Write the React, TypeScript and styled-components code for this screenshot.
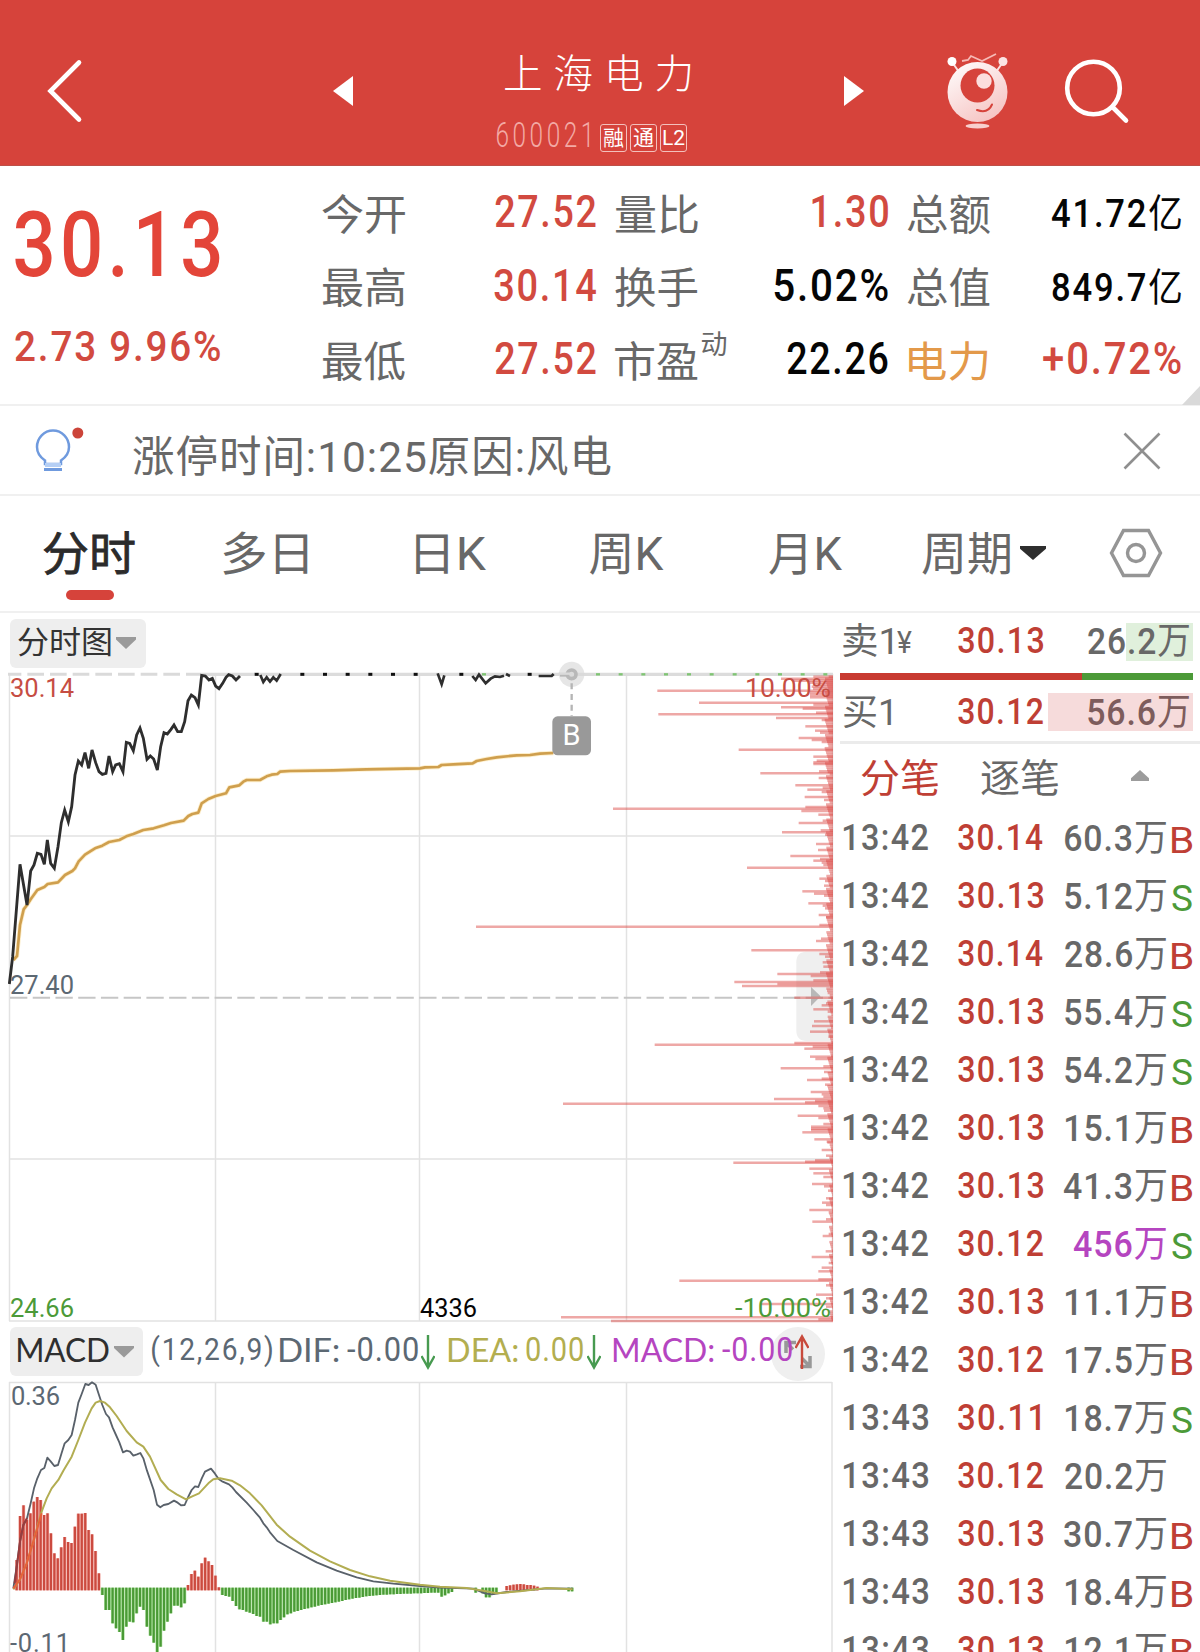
import React, { useLayoutEffect, useState } from 'react';
import styled, { createGlobalStyle } from 'styled-components';

const FONT = 'Roboto, "Noto Sans CJK SC", sans-serif';
const LATIN = 'Lato, "Noto Sans CJK SC", sans-serif';

const C = {
  brand: '#d6433b',
  rise: '#d24a40',
  riseDeep: '#bf3f35',
  fall: '#4c9a38',
  label: '#686868',
  ink: '#050505',
  slate: '#5c6873',
  olive: '#b3ae4f',
  violet: '#b545c0',
  line: '#f0f0f0',
};

const GlobalStyle = createGlobalStyle`
  *, *::before, *::after { box-sizing: border-box; }
  body { margin: 0; background: #fff; font-family: ${FONT}; }
`;

/* ---------- fitted text ---------- */

interface FitProps {
  w: number;
  size: number;
  color?: string;
  weight?: number;
  font?: string;
  spacing?: number;
  dy?: number;
  children: string;
}

const FitBox = styled.span<{ $w: number; $dy: number }>`
  display: block;
  flex: none;
  width: ${(p) => p.$w}px;
  position: relative;
  top: ${(p) => p.$dy}px;
`;

const FitInner = styled.span<{ $size: number; $color: string; $weight: number; $font: string; $spacing: number }>`
  display: inline-block;
  white-space: pre;
  transform-origin: 0 50%;
  font: ${(p) => p.$weight} ${(p) => p.$size}px/1.2 ${(p) => p.$font};
  letter-spacing: ${(p) => p.$spacing}px;
  color: ${(p) => p.$color};
`;

const Han = styled.span`
  font-weight: 400;
`;

/* Condenses a run of text so that its ink is exactly w pixels wide. */
function Fit({ w, size, color = C.label, weight = 400, font = FONT, spacing = 0, dy = 0, children }: FitProps) {
  const [fit, setFit] = useState({ scale: 1, shift: 0 });
  useLayoutEffect(() => {
    const ctx = document.createElement('canvas').getContext('2d') as any;
    ctx.font = `${weight} ${size}px ${font}`;
    ctx.letterSpacing = `${spacing}px`;
    const m = ctx.measureText(children);
    const scale = w / (m.actualBoundingBoxLeft + m.actualBoundingBoxRight);
    setFit({ scale, shift: m.actualBoundingBoxLeft * scale });
  }, [w, size, weight, font, spacing, children]);
  const parts = weight === 500 ? children.split(/([\u4e00-\u9fff]+)/).filter(Boolean) : [children];
  return (
    <FitBox $w={w} $dy={dy}>
      <FitInner
        $size={size}
        $color={color}
        $weight={weight}
        $font={font}
        $spacing={spacing}
        style={{ transform: `translateX(${fit.shift}px) scaleX(${fit.scale})` }}
      >
        {parts.map((part, i) => (weight === 500 && /[\u4e00-\u9fff]/.test(part) ? <Han key={i}>{part}</Han> : part))}
      </FitInner>
    </FitBox>
  );
}

/* ---------- header ---------- */

const Page = styled.div`
  width: 1200px;
  height: 1652px;
  overflow: hidden;
  background: #fff;
`;

const Header = styled.header`
  height: 166px;
  background: ${C.brand};
  display: flex;
  align-items: flex-start;
  border-bottom: 1px solid #bd5048;
`;

const HeaderSvg = styled.svg<{ $ml: number; $mt: number }>`
  flex: none;
  margin: ${(p) => p.$mt}px 0 0 ${(p) => p.$ml}px;
  overflow: visible;
`;

const TitleBlock = styled.div`
  width: 196px;
  margin: 48px 0 0 143px;
  display: flex;
  flex-direction: column;
  align-items: flex-start;
`;

const TitleLine = styled.div`
  height: 50px;
  padding-left: 9px;
  display: flex;
  align-items: center;
`;

const CodeLine = styled.div`
  height: 60px;
  padding-left: 1px;
  display: flex;
  align-items: center;
`;

const Badges = styled.div`
  display: flex;
  gap: 3px;
  margin: 26px 0 0 11px;
  height: 28px;
  align-self: flex-start;
`;

const Badge = styled.span`
  width: 27px;
  height: 28px;
  border: 1.5px solid #f3c0bc;
  border-radius: 3px;
  color: #fff;
  font-size: 21px;
  line-height: 26px;
  display: flex;
  justify-content: center;
`;

function Mascot() {
  return (
    <HeaderSvg $ml={83} $mt={50} width="62" height="80" viewBox="0 0 62 80">
      <defs>
        <linearGradient id="body" x1="0" y1="0" x2="0.6" y2="1">
          <stop offset="0" stopColor="#fff" />
          <stop offset="1" stopColor="#f6c6c5" />
        </linearGradient>
      </defs>
      <path d="M5 12 L12 22 M56 12 L49 22" stroke="#fbe0df" strokeWidth="2" />
      <circle cx="5" cy="11.500" r="4.500" fill="#fff" />
      <circle cx="56" cy="11.500" r="4.500" fill="#fbe4e3" />
      <path d="M15 11 L21 10 L24 6 L35 11 L49 4" stroke="#f6b9b5" strokeWidth="1.800" fill="none" />
      <ellipse cx="30.500" cy="42" rx="30" ry="30" fill="url(#body)" />
      <ellipse cx="30.500" cy="35.500" rx="17" ry="17" fill={C.brand} />
      <circle cx="37" cy="31" r="7.700" fill="#fcdedd" />
      <path d="M30 60 Q41 64 45 54.500" stroke={C.brand} strokeWidth="2" fill="none" strokeLinecap="round" />
      <ellipse cx="30.500" cy="76" rx="12" ry="2.600" fill="#f8cfcd" />
    </HeaderSvg>
  );
}

/* ---------- quote summary ---------- */

const Quote = styled.section`
  position: relative;
  height: 240px;
  display: flex;
  border-bottom: 2px solid ${C.line};
`;

const PriceBlock = styled.div`
  width: 322px;
  padding: 1px 0 0 15px;
`;

const PriceLine = styled.div<{ $h: number }>`
  height: ${(p) => p.$h}px;
  display: flex;
  align-items: center;
`;

const Stats = styled.div`
  display: grid;
  grid-template-columns: 273.500px 273px 274px;
  grid-auto-rows: 73.500px;
  column-gap: 19px;
  padding-top: 10px;
`;

const Stat = styled.div`
  display: flex;
  align-items: center;
  justify-content: space-between;
`;

const StatLabel = styled.div<{ $inset: number }>`
  display: flex;
  align-items: center;
  gap: 4px;
  padding-left: ${(p) => p.$inset}px;
`;

const Corner = styled.i`
  position: absolute;
  right: 0;
  bottom: -1px;
  border-style: solid;
  border-width: 0 0 19px 18px;
  border-color: transparent transparent #d9d9d9 transparent;
`;

type StatItem = { label: string; value: string; w: number; color: string; small?: boolean; sup?: string; labelColor?: string };

const STATS: StatItem[] = [
  { label: '今开', value: '27.52', w: 101, color: C.rise },
  { label: '量比', value: '1.30', w: 76, color: C.rise },
  { label: '总额', value: '41.72亿', w: 129, color: C.ink, small: true },
  { label: '最高', value: '30.14', w: 102, color: C.rise },
  { label: '换手', value: '5.02%', w: 114, color: C.ink },
  { label: '总值', value: '849.7亿', w: 129, color: C.ink, small: true },
  { label: '最低', value: '27.52', w: 101, color: C.rise },
  { label: '市盈', value: '22.26', w: 101, color: C.ink, sup: '动' },
  { label: '电力', value: '+0.72%', w: 138, color: C.rise, labelColor: '#e3994a' },
];

/* ---------- notice ---------- */

const Notice = styled.section`
  height: 90px;
  display: flex;
  align-items: center;
  border-bottom: 2px solid ${C.line};
`;

const Bulb = styled.svg`
  margin: 3px 0 0 34px;
  overflow: visible;
`;

const NoticeText = styled.div`
  margin-left: 51px;
  flex: 1;
`;

const Close = styled.svg`
  margin: 1px 39px 0 0;
`;

/* ---------- tabs ---------- */

const Tabs = styled.nav`
  height: 117px;
  display: flex;
  border-bottom: 2px solid ${C.line};
`;

const Tab = styled.div<{ $w: number; $active: boolean }>`
  width: ${(p) => p.$w}px;
  display: flex;
  flex-direction: column;
  align-items: center;
  padding-top: 31px;
  -webkit-text-stroke: ${(p) => (p.$active ? '0.8px' : '0')};
`;

const Underline = styled.i`
  width: 48px;
  height: 10px;
  margin-top: 8px;
  border-radius: 5px;
  background: ${C.brand};
`;

const Period = styled.div`
  display: flex;
  align-items: flex-start;
  gap: 10px;
  padding: 31px 0 0 16px;
  width: 203px;
`;

const Caret = styled.i<{ $w: number; $h: number; $color: string; $up?: boolean }>`
  flex: none;
  width: ${(p) => p.$w}px;
  height: ${(p) => p.$h}px;
  background: ${(p) => p.$color};
  clip-path: ${(p) => (p.$up ? 'polygon(50% 0, 100% 75%, 100% 100%, 0 100%, 0 75%)' : 'polygon(0 0, 100% 0, 100% 20%, 50% 100%, 0 20%)')};
`;

const PeriodCaret = styled(Caret)`
  margin-top: 19px;
`;

const Gear = styled.svg`
  margin-top: 32px;
`;

/* ---------- body ---------- */

const Body = styled.main`
  display: grid;
  grid-template-columns: 840px 360px;
`;

const ChartCol = styled.div`
  display: flex;
  flex-direction: column;
`;

const ToolRow = styled.div<{ $h: number; $pt?: number }>`
  height: ${(p) => p.$h}px;
  display: flex;
  align-items: center;
  padding: ${(p) => p.$pt ?? 0}px 0 0 10px;
  position: relative;
`;

const Select = styled.div<{ $w: number }>`
  width: ${(p) => p.$w}px;
  height: 49px;
  border-radius: 6px;
  background: #eeeeee;
  display: flex;
  align-items: center;
  padding-left: 8px;
  gap: 5px;
`;

const Readout = styled.div<{ $ml: number }>`
  display: flex;
  align-items: center;
  gap: 8px;
  margin-left: ${(p) => p.$ml}px;
`;

const Chart = styled.svg`
  display: block;
  position: relative;
  overflow: visible;
`;

const ExpandButton = styled.div`
  position: absolute;
  left: 771px;
  top: 2px;
  width: 54px;
  height: 54px;
  border-radius: 50%;
  background: #efefef;
`;

/* ---------- order book and ticks ---------- */

const Side = styled.aside`
  display: flex;
  flex-direction: column;
`;

const BookRow = styled.div<{ $mt: number; $fill: string; $from: number }>`
  height: 38px;
  margin: ${(p) => p.$mt}px 7px 0 0;
  padding-left: 3px;
  display: flex;
  align-items: center;
  background: linear-gradient(${(p) => p.$fill}, ${(p) => p.$fill}) ${(p) => p.$from}px 0 / 400px 100% no-repeat;
`;

const Slot = styled.div<{ $w: number; $end?: boolean; $gap?: number }>`
  width: ${(p) => p.$w}px;
  flex: none;
  display: flex;
  gap: ${(p) => p.$gap ?? 0}px;
  justify-content: ${(p) => (p.$end ? 'flex-end' : 'flex-start')};
`;

const Balance = styled.div`
  display: flex;
  height: 7px;
  margin: 12px 7px 0 0;
  background: ${C.fall};
`;

const BalanceBuy = styled.i`
  width: 242px;
  background: #c83a31;
`;

const SideTabs = styled.div`
  margin-top: 10px;
  border-top: 3px solid #ebebeb;
  height: 69px;
  display: flex;
  align-items: center;
  padding: 1px 0 0 21px;
`;

const SideCaret = styled(Caret)`
  margin: 0 0 3px 73px;
`;

const Tick = styled.div`
  height: 58px;
  flex: none;
  display: flex;
  align-items: center;
  padding-left: 4px;
`;

type TickRow = [string, string, string, number, string, boolean?];
const TICKS: TickRow[] = [
  ['13:42', '30.14', '60.3万', 102, 'B'],
  ['13:42', '30.13', '5.12万', 102, 'S'],
  ['13:42', '30.14', '28.6万', 102, 'B'],
  ['13:42', '30.13', '55.4万', 102, 'S'],
  ['13:42', '30.13', '54.2万', 102, 'S'],
  ['13:42', '30.13', '15.1万', 101, 'B'],
  ['13:42', '30.13', '41.3万', 103, 'B'],
  ['13:42', '30.12', '456万', 93, 'S', true],
  ['13:42', '30.13', '11.1万', 101, 'B'],
  ['13:42', '30.12', '17.5万', 101, 'B'],
  ['13:43', '30.11', '18.7万', 101, 'S'],
  ['13:43', '30.12', '20.2万', 102, ''],
  ['13:43', '30.13', '30.7万', 103, 'B'],
  ['13:43', '30.13', '18.4万', 101, 'B'],
  ['13:43', '30.13', '12.1万', 101, 'B'],
];

/* ---------- chart data (three units per pixel) ---------- */

const PRICE =
  '28,972 38,890 60,613 81,735 92,633 102,615 112,580 123,583 133,613 142,540 152,610 163,625 174,560 184,488 194,450 205,485 215,440 225,345 235,303 245,315 255,278 266,325 276,270 287,308 297,335 307,343 318,340 327,288 338,335 347,315 358,311 369,335 379,247 389,250 400,272 410,225 420,204 430,235 441,298 451,288 461,297 472,330 482,260 492,218 502,222 513,208 522,195 533,215 544,215 554,185 564,122 574,105 585,113 595,135 605,46 616,48 627,60 637,55 647,78 657,86 668,70 678,52 686,44 697,48 708,60 720,48';
const PRICE_TAILS = [
  '781,45 790,66 800,52 810,65 820,52 830,62 842,42',
  '1313,40 1325,73 1333,46',
  '1417,48 1427,60 1437,44 1457,70 1472,56 1485,49 1500,51 1512,47',
  '1518,42 1530,48',
  '1616,48 1655,48 1661,42',
];
const PRICE_DOTS = [770, 907, 975, 1043, 1111, 1179, 1247, 1384, 1589];
const GREEN_DOTS = [1452, 1794, 1862, 1930, 1998, 2067, 2135, 2204, 2272, 2340, 2408, 2476];
const AVERAGE =
  '40,900 51,888 60,795 71,748 81,735 92,718 112,690 133,681 143,672 174,667 195,645 217,633 225,625 236,604 255,584 285,565 307,557 327,546 358,540 379,529 400,522 430,510 461,505 492,496 513,489 551,482 565,468 577,462 595,458 605,430 625,417 647,408 678,400 688,382 718,376 730,365 740,360 780,360 800,349 815,344 832,342 840,335 870,333 1000,331 1100,328 1260,325 1275,322 1315,321 1325,315 1360,313 1418,310 1430,303 1460,297 1490,292 1550,286 1590,285 1620,281 1660,279';

/* Volume-at-price bars: [y, length], measured from the right border. */
const PROFILE: [number, number][] = [
  [50, 59], [56, 156], [62, 119], [68, 70], [74, 60], [80, 64], [86, 60], [92, 527], [98, 69], [105, 69], [112, 69], [128, 402], [134, 59], [142, 156],
  [146, 91], [158, 51], [163, 524], [174, 171], [180, 34], [199, 83], [212, 54], [218, 39], [234, 103], [240, 64], [246, 34], [269, 283],
  [290, 59], [302, 49], [307, 59], [312, 59], [334, 42], [340, 218], [354, 43], [376, 113], [383, 31], [389, 77], [396, 34], [411, 85],
  [420, 27], [441, 83], [446, 660], [453, 95], [464, 44], [482, 31], [489, 103], [511, 37], [517, 153], [524, 24], [552, 51], [570, 45],
  [588, 128], [597, 39], [602, 59], [608, 34], [615, 29], [623, 258], [656, 41], [663, 24], [677, 27], [694, 92], [701, 57], [707, 27],
  [730, 74], [737, 31], [745, 24], [765, 43], [772, 21], [795, 41], [800, 1071], [836, 36], [843, 51], [871, 245], [882, 41], [890, 24],
  [907, 31], [920, 29], [937, 39], [942, 167], [948, 67], [961, 59], [966, 296], [972, 167], [978, 273], [1013, 116], [1030, 21],
  [1036, 34], [1048, 59], [1055, 16], [1084, 57], [1098, 63], [1115, 69], [1130, 14], [1149, 116], [1154, 535], [1160, 61], [1166, 86],
  [1190, 69], [1197, 53], [1219, 29], [1225, 157], [1236, 27], [1256, 34], [1260, 78], [1274, 24], [1296, 67], [1303, 34], [1310, 29],
  [1317, 177], [1323, 54], [1327, 84], [1331, 810], [1338, 44], [1345, 29], [1352, 27], [1367, 106], [1374, 44], [1392, 29], [1400, 66],
  [1406, 66], [1410, 66], [1417, 92], [1438, 56], [1445, 19], [1470, 34], [1487, 21], [1501, 54], [1505, 84], [1508, 299], [1526, 71],
  [1540, 59], [1551, 29], [1572, 63], [1579, 27], [1592, 15], [1615, 21], [1628, 33], [1635, 21], [1650, 71], [1657, 13], [1678, 21],
  [1685, 62], [1722, 13], [1728, 31], [1774, 22], [1791, 64], [1809, 13], [1823, 34], [1834, 44], [1858, 44], [1862, 461], [1876, 21],
  [1904, 51], [1915, 21], [1932, 219], [1940, 21], [1972, 816], [1978, 44], [1983, 666],
];

/* Short bars that fill the foot of the profile. */
const FOOT: [number, number][] = Array.from({ length: 298 }, (_, i) => {
  const y = 50 + i * 6.5;
  const base = y < 340 ? 20 : y < 1000 ? 16 : y < 1450 ? 12 : 7;
  return [y, Math.max(2, base + ((i * 37) % 13) - 7)];
});

const DIF =
  '40,865 50,800 60,725 70,675 81,655 92,610 102,565 112,535 123,510 133,504 142,473 152,484 163,498 174,495 184,462 194,430 205,420 215,405 225,360 235,308 245,282 256,252 266,255 276,247 287,254 297,285 307,315 318,342 327,352 338,383 348,405 358,427 369,457 380,452 390,455 400,467 411,463 421,459 430,475 441,512 461,570 471,614 481,622 491,615 505,612 522,602 533,608 543,616 554,615 565,590 575,570 585,559 595,561 605,536 615,515 633,506 645,521 656,537 668,545 687,553 697,562 708,576 740,608 760,630 780,653 790,670 800,682 810,697 832,723 880,750 950,787 1010,812 1070,832 1120,844 1180,851 1260,858 1320,863 1420,866 1455,880 1475,883 1520,876 1600,869 1640,865 1718,866';
const DEA =
  '40,868 60,838 80,790 100,725 123,640 140,595 155,565 175,540 190,512 215,470 235,420 255,368 275,325 287,308 300,303 315,308 330,322 350,348 380,393 410,427 430,440 450,470 482,540 505,567 530,583 558,598 575,590 597,580 625,550 640,538 660,535 695,542 720,556 750,580 785,616 830,674 870,710 930,752 990,784 1050,810 1110,829 1170,842 1260,854 1320,860 1400,864 1450,872 1490,880 1560,874 1640,864 1718,868';

const STEP = 10.28;
const RUNS: { x: number; up: boolean; v: number[] }[] = [
  { x: 50, up: true, v: [780, 648, 616, 660, 640, 605, 591, 600, 645, 640, 700, 760, 775, 742, 711, 726, 729, 680, 641, 641, 639, 690, 703, 753, 820] },
  { x: 307, up: false, v: [885, 930, 930, 970, 985, 996, 1020, 980, 965, 967, 940, 920, 930, 980, 1007, 1028, 1060, 1040, 992, 965, 940, 917, 917, 922, 910] },
  { x: 564, up: true, v: [855, 822, 812, 830, 790, 773, 784, 795, 827, 862] },
  {
    x: 667,
    up: false,
    v: [885, 888, 890, 903, 918, 928, 930, 935, 938, 942, 948, 950, 965, 965, 973, 970, 970, 960, 952, 943, 940, 935, 933, 930, 927, 925, 922, 920, 917, 915, 913, 911, 909, 907, 905, 903, 900, 898, 896, 894, 893, 891, 889, 888, 887, 886, 885, 884, 884, 883, 883, 882, 882, 881, 881, 881, 880, 880, 880, 879, 879, 878, 878, 878, 890, 886, 880, 876],
  },
  { x: 1427, up: false, v: [878] },
  { x: 1448, up: false, v: [880, 892, 892, 885, 878] },
  { x: 1520, up: true, v: [858, 856, 854, 853, 852, 853, 855, 855, 857, 860] },
  { x: 1706, up: false, v: [874, 874] },
];

const ChartText = styled.text`
  font-family: ${FONT};
  font-weight: 400;
  font-size: 25.500px;
`;

const MarkerText = styled(ChartText)`
  font-size: 29px;
`;

function PriceChart() {
  return (
    <Chart width="840" height="655" viewBox="0 0 840 655">
      <g stroke="#e2e2e2" strokeWidth="1.500" fill="none">
        <path d="M9.500 4V651M215.500 4V651M419.500 4V651M626.500 4V651M832.500 4V651" />
        <path d="M9 166H832M9 489H832M9 651H832" />
      </g>
      <g transform="translate(0 -10) scale(0.33333)" fill="none">
        <path d="M2420 875H2499V1143H2420Q2389 1143 2389 1111V907Q2389 875 2420 875Z" fill="#efefef" />
        <path d="M2433 981V1038L2462 1009Z" fill="#b8b8b8" />
        <path d="M24 43H605" stroke="#dadada" strokeWidth="9" strokeDasharray="50 18" strokeDashoffset="10" />
        <path d="M605 43H2499" stroke="#dcdcdc" strokeWidth="10" />
        <path d="M30 1013H2499" stroke="#c6c6c6" strokeWidth="6" strokeDasharray="52 16.200" />
        {[...PROFILE, ...FOOT].map(([y, len], i) => (
          <path key={i} d={`M${2499 - len} ${y}H2499`} stroke="#dc4a46" strokeOpacity="0.480" strokeWidth="7.500" />
        ))}
        <polyline points={AVERAGE} stroke="#fbe3a6" strokeOpacity="0.600" strokeWidth="13" />
        <polyline points={AVERAGE} stroke="#cf9f4e" strokeWidth="8" strokeLinejoin="round" />
        <polyline points={PRICE} stroke="#2e2e2e" strokeWidth="8.500" />
        {PRICE_TAILS.map((t) => (
          <polyline key={t} points={t} stroke="#2e2e2e" strokeWidth="8" />
        ))}
        {PRICE_DOTS.map((x) => (
          <path key={x} d={`M${x - 6} 43h12`} stroke="#111" strokeWidth="9" />
        ))}
        {GREEN_DOTS.map((x) => (
          <path key={x} d={`M${x - 6} 43h12`} stroke="#7fc573" strokeWidth="7" />
        ))}
        <circle cx="1715" cy="43" r="38" fill="#d9d9d9" fillOpacity="0.650" />
        <path d="M1680 46H1715" stroke="#b8b8b8" strokeWidth="8" />
        <circle cx="1715" cy="43" r="13" fill="#dadada" stroke="#b8b8b8" strokeWidth="11" />
        <path d="M1676 41H1715" stroke="#dadada" strokeWidth="7" />
        <path d="M1715 70V168" stroke="#b5b5b5" strokeWidth="7" strokeDasharray="18 14" />
        <rect x="1657" y="169" width="116" height="117" rx="16" fill="#999" />
      </g>
      <MarkerText x="571.500" y="75" textAnchor="middle" fill="#fff">B</MarkerText>
      <ChartText x="10" y="27" fill="#c64d43" textLength="64">30.14</ChartText>
      <ChartText x="745" y="27" fill="#c64d43" textLength="86" lengthAdjust="spacingAndGlyphs">10.00%</ChartText>
      <ChartText x="10" y="324" fill={C.slate} textLength="64">27.40</ChartText>
      <ChartText x="10" y="647" fill={C.fall} textLength="64">24.66</ChartText>
      <ChartText x="420" y="647" fill={C.ink} textLength="57" lengthAdjust="spacingAndGlyphs">4336</ChartText>
      <ChartText x="735" y="647" fill={C.fall} textLength="96" lengthAdjust="spacingAndGlyphs">-10.00%</ChartText>
    </Chart>
  );
}

function MacdChart() {
  return (
    <Chart width="840" height="274" viewBox="0 0 840 274">
      <path d="M9.500 4V274M215.500 4V274M419.500 4V274M626.500 4V274M832 4V274M9 4.500H832" stroke="#e2e2e2" strokeWidth="1.500" />
      <g transform="translate(0 -78) scale(0.33333)" fill="none">
        {RUNS.map((run) =>
          run.v.map((v, i) => {
            const x = run.x + i * STEP;
            return (
              <g key={`${run.x}-${i}`}>
                <path d={`M${x} ${run.up ? 871 : 863}V${v}`} stroke={run.up ? '#f0a69f' : '#a4dc94'} strokeWidth="10" />
                <path d={`M${x} ${run.up ? 871 : 863}V${v}`} stroke={run.up ? '#cb4a3f' : '#4a9a36'} strokeWidth="6.500" />
              </g>
            );
          }),
        )}
        <polyline points={DIF} stroke="#59616a" strokeWidth="5.500" strokeLinejoin="round" />
        <polyline points={DEA} stroke="#b2ad52" strokeWidth="6" strokeLinejoin="round" />
        <path d="M40 865L60 838L80 790L100 725L125 640" stroke="#e8603a" strokeWidth="6" />
        <path d="M44 850L60 725L70 675L81 655" stroke="#9b3b3c" strokeWidth="6" />
      </g>
      <ChartText x="11" y="27" fill={C.slate} textLength="49">0.36</ChartText>
      <ChartText x="10" y="274" fill={C.slate} textLength="60">-0.11</ChartText>
    </Chart>
  );
}

function Arrow({ color, up }: { color: string; up?: boolean }) {
  return (
    <svg width="14" height="36" viewBox="0 0 14 36" fill="none" stroke={color} strokeWidth="2.400">
      <path d={up ? 'M7 35V2M0.500 14L7 2.500L13.500 14' : 'M7 1V34M0.500 22L7 33.500L13.500 22'} />
    </svg>
  );
}

const ArrowSlot = styled.div<{ $ml: number }>`
  display: flex;
  position: relative;
  margin-left: ${(p) => p.$ml}px;
`;

const ExpandIcon = styled.svg`
  display: block;
`;

const TABS: [string, number, number][] = [
  ['分时', 179, 91],
  ['多日', 173, 85],
  ['日K', 197, 70],
  ['周K', 155, 74],
  ['月K', 202, 73],
];

export default function App() {
  return (
    <Page>
      <GlobalStyle />
      <Header>
        <HeaderSvg $ml={46} $mt={58} width="36" height="66" viewBox="0 0 36 66" fill="none">
          <path d="M33 4.500L4.500 33L33 61.500" stroke="#fff" strokeWidth="4.600" strokeLinecap="round" />
        </HeaderSvg>
        <HeaderSvg $ml={251} $mt={76} width="20" height="30" viewBox="0 0 20 30">
          <path d="M20 0V30L0 15Z" fill="#fff" />
        </HeaderSvg>
        <TitleBlock>
          <TitleLine>
            <Fit w={186} size={40} weight={300} color="#fff" spacing={11} dy={2}>上海电力</Fit>
          </TitleLine>
          <CodeLine>
            <Fit w={92} size={35} weight={300} color="#f3aaa5" spacing={5} dy={8}>600021</Fit>
            <Badges>
              <Badge>融</Badge>
              <Badge>通</Badge>
              <Badge>L2</Badge>
            </Badges>
          </CodeLine>
        </TitleBlock>
        <HeaderSvg $ml={152} $mt={76} width="20" height="30" viewBox="0 0 20 30">
          <path d="M0 0V30L20 15Z" fill="#fff" />
        </HeaderSvg>
        <Mascot />
        <HeaderSvg $ml={55} $mt={57} width="66" height="68" viewBox="0 0 66 68" fill="none">
          <circle cx="29.500" cy="31" r="26.300" stroke="#fff" strokeWidth="4.600" />
          <path d="M48.500 50L62 63.500" stroke="#fff" strokeWidth="4.600" strokeLinecap="round" />
        </HeaderSvg>
      </Header>

      <Quote>
        <PriceBlock>
          <PriceLine $h={157}>
            <Fit w={205} size={90} weight={500} color="#e34539" spacing={5}>30.13</Fit>
          </PriceLine>
          <PriceLine $h={45}>
            <Fit w={205} size={43} weight={500} color={C.rise} spacing={2}>2.73 9.96%</Fit>
          </PriceLine>
        </PriceBlock>
        <Stats>
          {STATS.map((s, i) => (
            <Stat key={i}>
              <StatLabel $inset={s.labelColor ? 2 : 0}>
                <Fit w={s.labelColor ? 79 : 83} size={42} color={s.labelColor} dy={3}>{s.label}</Fit>
                {s.sup && <Fit w={25} size={27} dy={-15}>{s.sup}</Fit>}
              </StatLabel>
              <Fit w={s.w} size={s.small ? 39 : 44} weight={500} color={s.color} spacing={2} dy={s.small ? 2 : 0}>
                {s.value}
              </Fit>
            </Stat>
          ))}
        </Stats>
        <Corner />
      </Quote>

      <Notice>
        <Bulb width="48" height="46" viewBox="0 0 48 46" fill="none">
          <path d="M11 35V31.500Q3 26 3 18A16 16.500 0 0 1 35 18Q35 26 27 31.500V35Z" stroke="#6f9ade" strokeWidth="2.500" />
          <path d="M11 34H27V38H11Z" fill="#b5cff5" />
          <path d="M10 40.500H28" stroke="#6f9ade" strokeWidth="3" />
          <circle cx="43.800" cy="4" r="5.500" fill="#cc4439" />
        </Bulb>
        <NoticeText>
          <Fit w={478} size={43} spacing={1} dy={8}>涨停时间:10:25原因:风电</Fit>
        </NoticeText>
        <Close width="38" height="38" viewBox="0 0 38 38">
          <path d="M1.500 1.500L36.500 36.500M36.500 1.500L1.500 36.500" stroke="#8f8f8f" strokeWidth="2.600" />
        </Close>
      </Notice>

      <Tabs>
        {TABS.map(([name, slot, w], i) => (
          <Tab key={name} $w={slot} $active={i === 0}>
            <Fit w={w} size={46} color={i === 0 ? '#2b2b2b' : C.label}>{name}</Fit>
            {i === 0 && <Underline />}
          </Tab>
        ))}
        <Period>
          <Fit w={88} size={46}>周期</Fit>
          <PeriodCaret $w={26} $h={14} $color="#2e2e2e" />
        </Period>
        <Gear width="54" height="50" viewBox="0 0 54 50" fill="none" stroke="#959595" strokeWidth="3.400">
          <path d="M14.500 2.500H39.500L51.500 25L39.500 47.500H14.500L2.500 25Z" />
          <circle cx="27" cy="25" r="8.500" />
        </Gear>
      </Tabs>

      <Body>
        <ChartCol>
          <ToolRow $h={57} $pt={3}>
            <Select $w={136}>
              <Fit w={93} size={31} color="#333">分时图</Fit>
              <Caret $w={20} $h={12} $color="#9a9a9a" />
            </Select>
          </ToolRow>
          <PriceChart />
          <ToolRow $h={53}>
            <ExpandButton>
              <ExpandIcon width="54" height="54" viewBox="0 0 54 54" fill="none" stroke="#989898" strokeWidth="3.500">
                <path d="M15 26V15.500H25M15 15.500L22 22.500M39 29V39.500H29M39 39.500L31 31.500" />
              </ExpandIcon>
            </ExpandButton>
            <Select $w={133}>
              <Fit w={91} size={33} font={LATIN} color="#2f2f2f" dy={-2}>MACD</Fit>
              <Caret $w={20} $h={12} $color="#9a9a9a" />
            </Select>
            <Readout $ml={9}>
              <Fit w={120} size={32} color={C.slate} spacing={2} dy={-2}>(12,26,9)</Fit>
              <Fit w={59} size={33} font={LATIN} color={C.slate} dy={-2}>DIF:</Fit>
              <Fit w={71} size={33} color={C.slate} spacing={1} dy={-2}>-0.00</Fit>
            </Readout>
            <ArrowSlot $ml={3}><Arrow color="#479a50" /></ArrowSlot>
            <Readout $ml={14}>
              <Fit w={69} size={33} font={LATIN} color={C.olive} dy={-2}>DEA:</Fit>
              <Fit w={57} size={33} color={C.olive} spacing={1} dy={-2}>0.00</Fit>
            </Readout>
            <ArrowSlot $ml={4}><Arrow color="#479a50" /></ArrowSlot>
            <Readout $ml={13}>
              <Fit w={100} size={33} font={LATIN} color={C.violet} dy={-2}>MACD:</Fit>
              <Fit w={70} size={33} color={C.violet} spacing={1} dy={-2}>-0.00</Fit>
            </Readout>
            <ArrowSlot $ml={3}><Arrow color="#c84a3c" up /></ArrowSlot>
          </ToolRow>
          <MacdChart />
        </ChartCol>

        <Side>
          <BookRow $mt={9.500} $fill="#e0f0dc" $from={286}>
            <Slot $w={115} $gap={5}>
              <Fit w={49} size={36} dy={1}>卖1</Fit>
              <Fit w={15} size={32} dy={3}>¥</Fit>
            </Slot>
            <Slot $w={130}><Fit w={85} size={37} weight={500} color={C.riseDeep} spacing={1.500}>30.13</Fit></Slot>
            <Fit w={101} size={37} weight={500} spacing={1} dy={1}>26.2万</Fit>
          </BookRow>
          <Balance><BalanceBuy /></Balance>
          <BookRow $mt={13} $fill="#f6dbdb" $from={208}>
            <Slot $w={115}><Fit w={48} size={36} dy={2}>买1</Fit></Slot>
            <Slot $w={130}><Fit w={85} size={37} weight={500} color={C.riseDeep} spacing={1.500} dy={1}>30.12</Fit></Slot>
            <Fit w={101} size={37} weight={500} color="#7d5c5c" spacing={1} dy={2}>56.6万</Fit>
          </BookRow>
          <SideTabs>
            <Slot $w={120}><Fit w={77} size={39} color={C.riseDeep} dy={2}>分笔</Fit></Slot>
            <Fit w={77} size={39} dy={2}>逐笔</Fit>
            <SideCaret $w={18} $h={11} $color="#9c9c9c" $up />
          </SideTabs>
          {TICKS.map(([time, price, vol, w, side, big], i) => (
            <Tick key={i}>
              <Slot $w={114}><Fit w={84} size={37} weight={500} spacing={1.500}>{time}</Fit></Slot>
              <Slot $w={86}><Fit w={price === '30.11' ? 82 : 85} size={37} weight={500} color={C.riseDeep} spacing={1.500}>{price}</Fit></Slot>
              <Slot $w={122} $end><Fit w={w - 1} size={37} weight={500} color={big ? C.violet : C.label} spacing={1} dy={1}>{vol}</Fit></Slot>
              <Slot $w={26} $end>
                {side && <Fit w={20} size={37} color={side === 'B' ? C.riseDeep : C.fall} dy={3}>{side}</Fit>}
              </Slot>
            </Tick>
          ))}
        </Side>
      </Body>
    </Page>
  );
}
